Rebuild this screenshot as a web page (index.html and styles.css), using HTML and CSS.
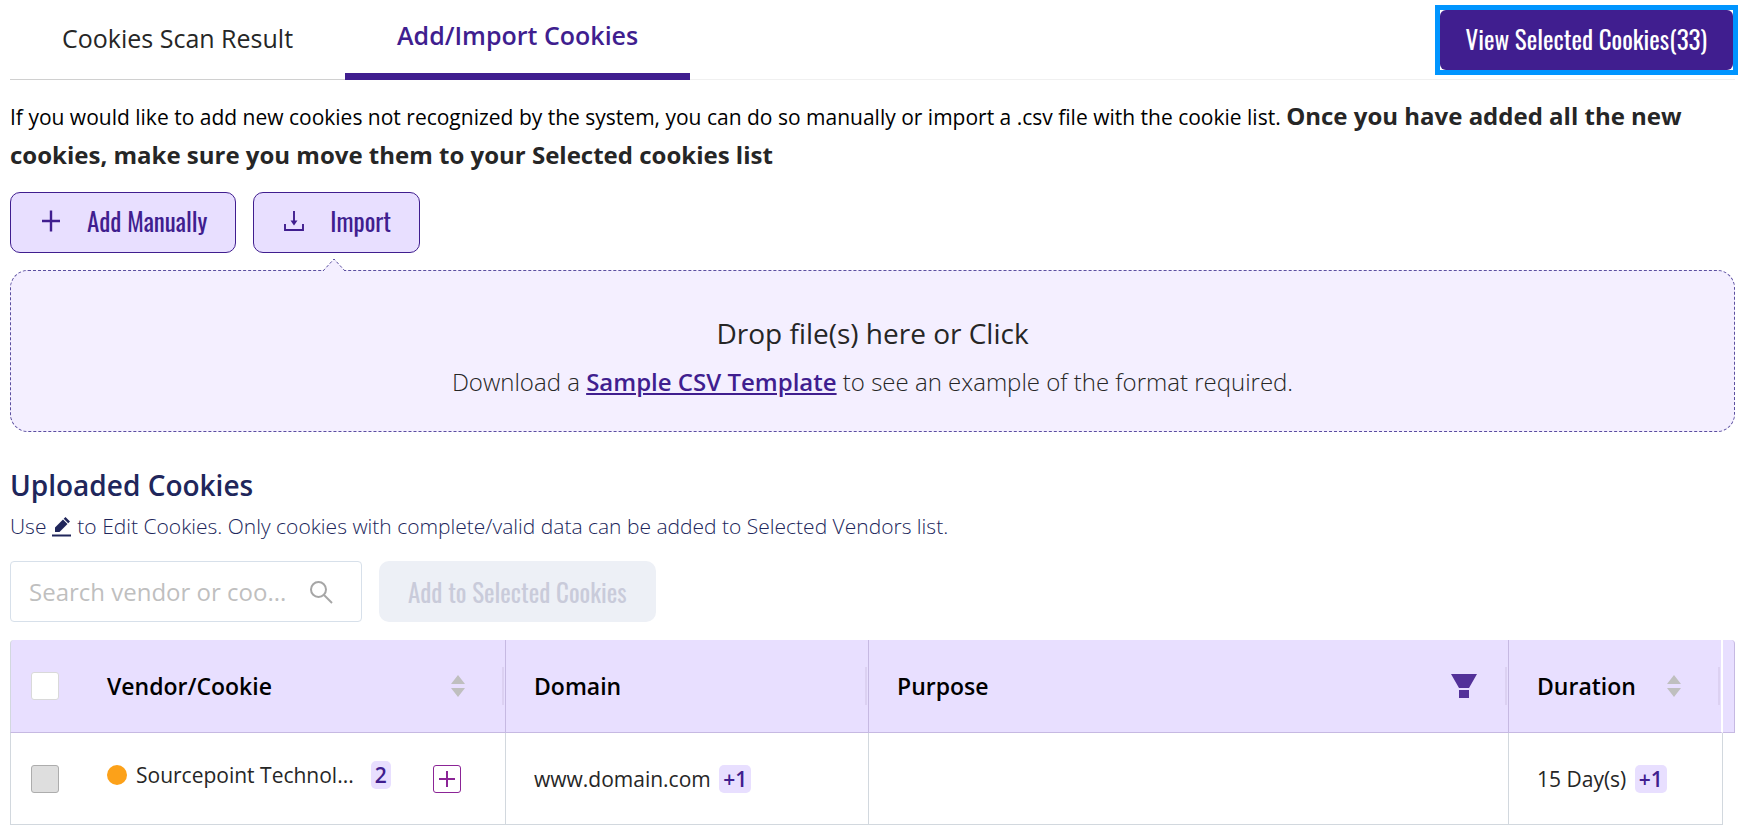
FILE: index.html
```html
<!DOCTYPE html>
<html lang="en">
  <head>
    <meta charset="UTF-8" />
    <meta name="viewport" content="width=device-width, initial-scale=1.0" />
    <title>Add/Import Cookies</title>
    <link rel="stylesheet" href="styles.css">
  </head>
  <body>
    <header class="top-bar">
      <div class="tabs" role="tablist">
        <button class="tab" type="button" role="tab" aria-selected="false">Cookies Scan Result</button>
        <button class="tab active" type="button" role="tab" aria-selected="true">Add/Import Cookies</button>
      </div>
      <div class="focus-ring">
        <button class="btn btn-primary" type="button">View Selected Cookies(33)</button>
      </div>
    </header>

    <p class="intro">If you would like to add new cookies not recognized by the system, you can do so manually or import a .csv file with the cookie list. <strong>Once you have added all the new cookies, make sure you move them to your Selected cookies list</strong></p>

    <div class="actions">
      <button class="btn btn-light" type="button">
        <svg class="btn-icon" viewBox="0 0 24 24" aria-hidden="true">
          <path d="M12 1.500v21M3 12h18" stroke-width="2.400" />
        </svg>
        <span>Add Manually</span>
      </button>
      <button class="btn btn-light" type="button">
        <svg class="btn-icon" viewBox="0 0 24 24" aria-hidden="true">
          <path d="M3 15v6h18v-6M12 2v11" stroke-width="1.900" />
          <path class="fill" d="M8.500 11.500h7L12 16.500z" />
        </svg>
        <span>Import</span>
      </button>
    </div>

    <section class="drop-zone">
      <svg class="drop-arrow" viewBox="0 0 24 14" aria-hidden="true">
        <path d="M1 13L12 1l11 12" />
      </svg>
      <p class="drop-title">Drop file(s) here or Click</p>
      <p class="drop-text">Download a <a href="#">Sample CSV Template</a> to see an example of the format required.</p>
    </section>

    <h2>Uploaded Cookies</h2>
    <p class="hint">Use
      <svg class="edit-icon" viewBox="0 0 20 20" aria-hidden="true">
        <path d="M3 15v-4.500L11 2.500l4.500 4.500-8 8zM11.700 1.800L13.500 0 18 4.500l-1.800 1.800zM0 17.500h19v2H0z" />
      </svg>
      to Edit Cookies. Only cookies with complete/valid data can be added to Selected Vendors list.</p>

    <div class="toolbar">
      <div class="search">
        <input type="text" placeholder="Search vendor or coo..." aria-label="Search vendor or cookie" />
        <svg class="search-icon" viewBox="0 0 24 24" aria-hidden="true">
          <circle cx="9.500" cy="9.500" r="7.500" />
          <path d="M15 15l8 8" />
        </svg>
      </div>
      <button class="btn btn-disabled" type="button" disabled>Add to Selected Cookies</button>
    </div>

    <table class="cookie-table">
      <colgroup>
        <col class="col-check" />
        <col class="col-vendor" />
        <col class="col-domain" />
        <col class="col-purpose" />
        <col class="col-duration" />
        <col class="col-scroll" />
      </colgroup>
      <thead>
        <tr>
          <th class="check"><input type="checkbox" aria-label="Select all cookies" /></th>
          <th class="vendor resizable">
            <div class="head">
              <span>Vendor/Cookie</span>
              <svg class="sort-icon" viewBox="0 0 14 22" aria-hidden="true"><path d="M0 9l7-9 7 9zM0 13h14l-7 9z" /></svg>
            </div>
          </th>
          <th class="resizable">Domain</th>
          <th class="resizable">
            <div class="head">
              <span>Purpose</span>
              <svg class="filter-icon" viewBox="0 0 26 24" aria-hidden="true"><path d="M0 0h26l-8 14H8zM8 16h10v8H8z" /></svg>
            </div>
          </th>
          <th class="resizable duration">
            <div class="head">
              <span>Duration</span>
              <svg class="sort-icon" viewBox="0 0 14 22" aria-hidden="true"><path d="M0 9l7-9 7 9zM0 13h14l-7 9z" /></svg>
            </div>
          </th>
          <td class="scroll"></td>
        </tr>
      </thead>
      <tbody>
        <tr>
          <td class="check"><input type="checkbox" aria-label="Select Sourcepoint Technol..." disabled /></td>
          <td class="vendor">
            <div class="vendor-row">
              <div class="vendor-info">
                <span class="dot"></span>
                <span class="vendor-name">Sourcepoint Technol...</span>
                <span class="badge">2</span>
              </div>
              <button class="expand" type="button" aria-label="Expand">
                <svg viewBox="0 0 16 16" aria-hidden="true"><path d="M8 0v16M0 8h16" /></svg>
              </button>
            </div>
          </td>
          <td>www.domain.com <span class="badge">+1</span></td>
          <td></td>
          <td class="duration">15 Day(s) <span class="badge">+1</span></td>
          <td class="scroll"></td>
        </tr>
      </tbody>
    </table>
  </body>
</html>
```
FILE: styles.css
```css
* {
  box-sizing: border-box;
}

body {
  font-family: "Open Sans", sans-serif;
  margin: 0;
  padding: 0 6px 10px 10px;
  background: #fff;
  color: #262626;
  font-size: 21px;
}

button,
input {
  font-family: inherit;
}

p,
h2 {
  margin: 0;
}

/* Tabs */
.top-bar {
  display: flex;
  justify-content: space-between;
  align-items: center;
  height: 80px;
  border-bottom: 1px solid #f0f0f0;
}

.tabs {
  display: flex;
  height: 80px;
}

.tab {
  padding: 0 52px 2px;
  border: none;
  border-bottom: 1px solid #d0d0d0;
  background: none;
  color: #262626;
  font-size: 25px;
  cursor: pointer;
}

.tab.active {
  border-bottom: 7px solid #401e8f;
  color: #401e8f;
  font-weight: 600;
}

/* Buttons */
.btn {
  height: 61px;
  padding: 0 28px;
  border: 1px solid transparent;
  border-radius: 10px;
  font-family: Oswald, "Liberation Sans Narrow", sans-serif;
  font-size: 25px;
  font-weight: 400;
  cursor: pointer;
}

.btn-primary {
  display: block;
  height: 60px;
  padding: 0 25px 2px;
  background: #401e8f;
  color: #fff;
  border-radius: 6px;
  outline: none;
}

.focus-ring {
  margin-right: 2px;
  outline: 5px solid #0095ff;
}

.btn-light {
  display: flex;
  align-items: center;
  gap: 24px;
  padding-bottom: 4px;
  background: #e8dfff;
  border-color: #401e8f;
  color: #401e8f;
}

.btn-icon {
  width: 24px;
  height: 24px;
  fill: none;
  stroke: #401e8f;
}

.btn-icon .fill {
  fill: #401e8f;
  stroke: none;
}

.btn-disabled {
  background: #edf0f6;
  color: #c9cbda;
}

.intro {
  margin-top: 17px;
  color: #000;
  line-height: 38px;
}

.intro strong {
  color: #262626;
  font-size: 24px;
}

.actions {
  display: flex;
  gap: 17px;
  margin-top: 17px;
}

/* Upload area */
.drop-zone {
  position: relative;
  margin-top: 17px;
  padding: 40px 20px 30px;
  border: 1px dashed #5b4fa0;
  border-radius: 18px;
  background: #f4efff;
  text-align: center;
}

.drop-arrow {
  position: absolute;
  top: -13px;
  left: 311px;
  width: 24px;
  height: 14px;
  fill: #f4efff;
  stroke: #5b4fa0;
  stroke-dasharray: 3 2;
}

.drop-title {
  font-size: 28px;
  line-height: 44px;
}

.drop-text {
  margin-top: 8px;
  font-size: 24px;
  font-weight: 300;
  line-height: 38px;
}

.drop-text a {
  color: #401e8f;
  font-weight: 600;
}

h2 {
  margin-top: 32px;
  color: #20265b;
  font-size: 28px;
  font-weight: 600;
  line-height: 42px;
}

.hint {
  margin-top: 4px;
  color: #20265b;
  font-weight: 300;
  line-height: 32px;
}

.edit-icon {
  width: 20px;
  height: 20px;
  vertical-align: -3px;
  fill: #20265b;
}

/* Search and add */
.toolbar {
  display: flex;
  gap: 17px;
  margin-top: 19px;
}

.search {
  display: flex;
  align-items: center;
  gap: 18px;
  width: 352px;
  height: 61px;
  padding: 0 28px 0 18px;
  border: 1px solid #d7e0ea;
  border-radius: 4px;
}

.search input {
  flex: 1;
  min-width: 0;
  padding: 0;
  border: none;
  outline: none;
  font-size: 24px;
}

.search input::placeholder {
  color: #bfbfbf;
}

.search-icon {
  width: 24px;
  height: 24px;
  fill: none;
  stroke: #a6a6a6;
  stroke-width: 2;
}

/* Table */
.cookie-table {
  width: 100%;
  margin-top: 18px;
  table-layout: fixed;
  border-collapse: separate;
  border-spacing: 0;
}

.col-check {
  width: 69px;
}

.col-vendor {
  width: 427px;
}

.col-domain {
  width: 363px;
}

.col-duration {
  width: 214px;
}

.col-scroll {
  width: 12px;
}

.cookie-table th,
.cookie-table td {
  height: 92px;
  padding: 0 28px;
  border-right: 1px solid #d2d8de;
  border-bottom: 1px solid #d2d8de;
  text-align: left;
}

.cookie-table th,
.cookie-table thead td {
  height: 93px;
  background: #e8dfff;
  border-color: #c6b9e2;
  color: #000;
  font-size: 23px;
  font-weight: 600;
}

.cookie-table .check {
  padding: 0 0 0 20px;
  border-right: none;
  border-left: 1px solid #d2d8de;
}

.cookie-table th.check {
  border-top-left-radius: 4px;
}

/* short handle next to the column border */
.cookie-table .resizable {
  background: linear-gradient(#dcd1f2, #dcd1f2) right 1px center / 2px 38px no-repeat #e8dfff;
}

.cookie-table th.duration {
  border-right: 2px solid #fff;
}

.cookie-table .scroll {
  padding: 0;
}

.cookie-table thead .scroll {
  border-top-right-radius: 4px;
}

.cookie-table tbody .scroll {
  border: none;
}

.check input {
  display: block;
  appearance: none;
  width: 28px;
  height: 28px;
  margin: 0;
  border: 1px solid #d9d9d9;
  border-radius: 3px;
  background: #fff;
}

.check input:disabled {
  background: #dedede;
  border-color: #adadad;
}

.head {
  display: flex;
  justify-content: space-between;
  align-items: center;
}

.vendor .head,
.duration .head {
  padding-right: 12px;
}

.sort-icon {
  width: 14px;
  height: 22px;
  fill: #bfbfbf;
}

.filter-icon {
  width: 26px;
  height: 24px;
  margin-right: 3px;
  fill: #533199;
}

.vendor-row {
  display: flex;
  align-items: center;
  justify-content: space-between;
  padding-right: 16px;
}

.vendor-info {
  display: flex;
  align-items: center;
  padding-bottom: 8px;
}

.dot {
  width: 20px;
  height: 20px;
  margin-right: 9px;
  border-radius: 50%;
  background: #fca119;
}

.vendor-name {
  margin-right: 17px;
  white-space: nowrap;
}

.badge {
  display: inline-block;
  margin-left: 3px;
  padding: 0 4px;
  border-radius: 5px;
  background: #e8dfff;
  color: #401e8f;
  font-weight: 600;
  line-height: 28px;
}

.vendor-info .badge {
  margin-left: 0;
}

.expand {
  display: flex;
  align-items: center;
  justify-content: center;
  width: 28px;
  height: 28px;
  padding: 0;
  border: 1px solid #8b2496;
  border-radius: 3px;
  background: #fff;
  cursor: pointer;
}

.expand svg {
  width: 16px;
  height: 16px;
  stroke: #8b2496;
  stroke-width: 2;
}
```
